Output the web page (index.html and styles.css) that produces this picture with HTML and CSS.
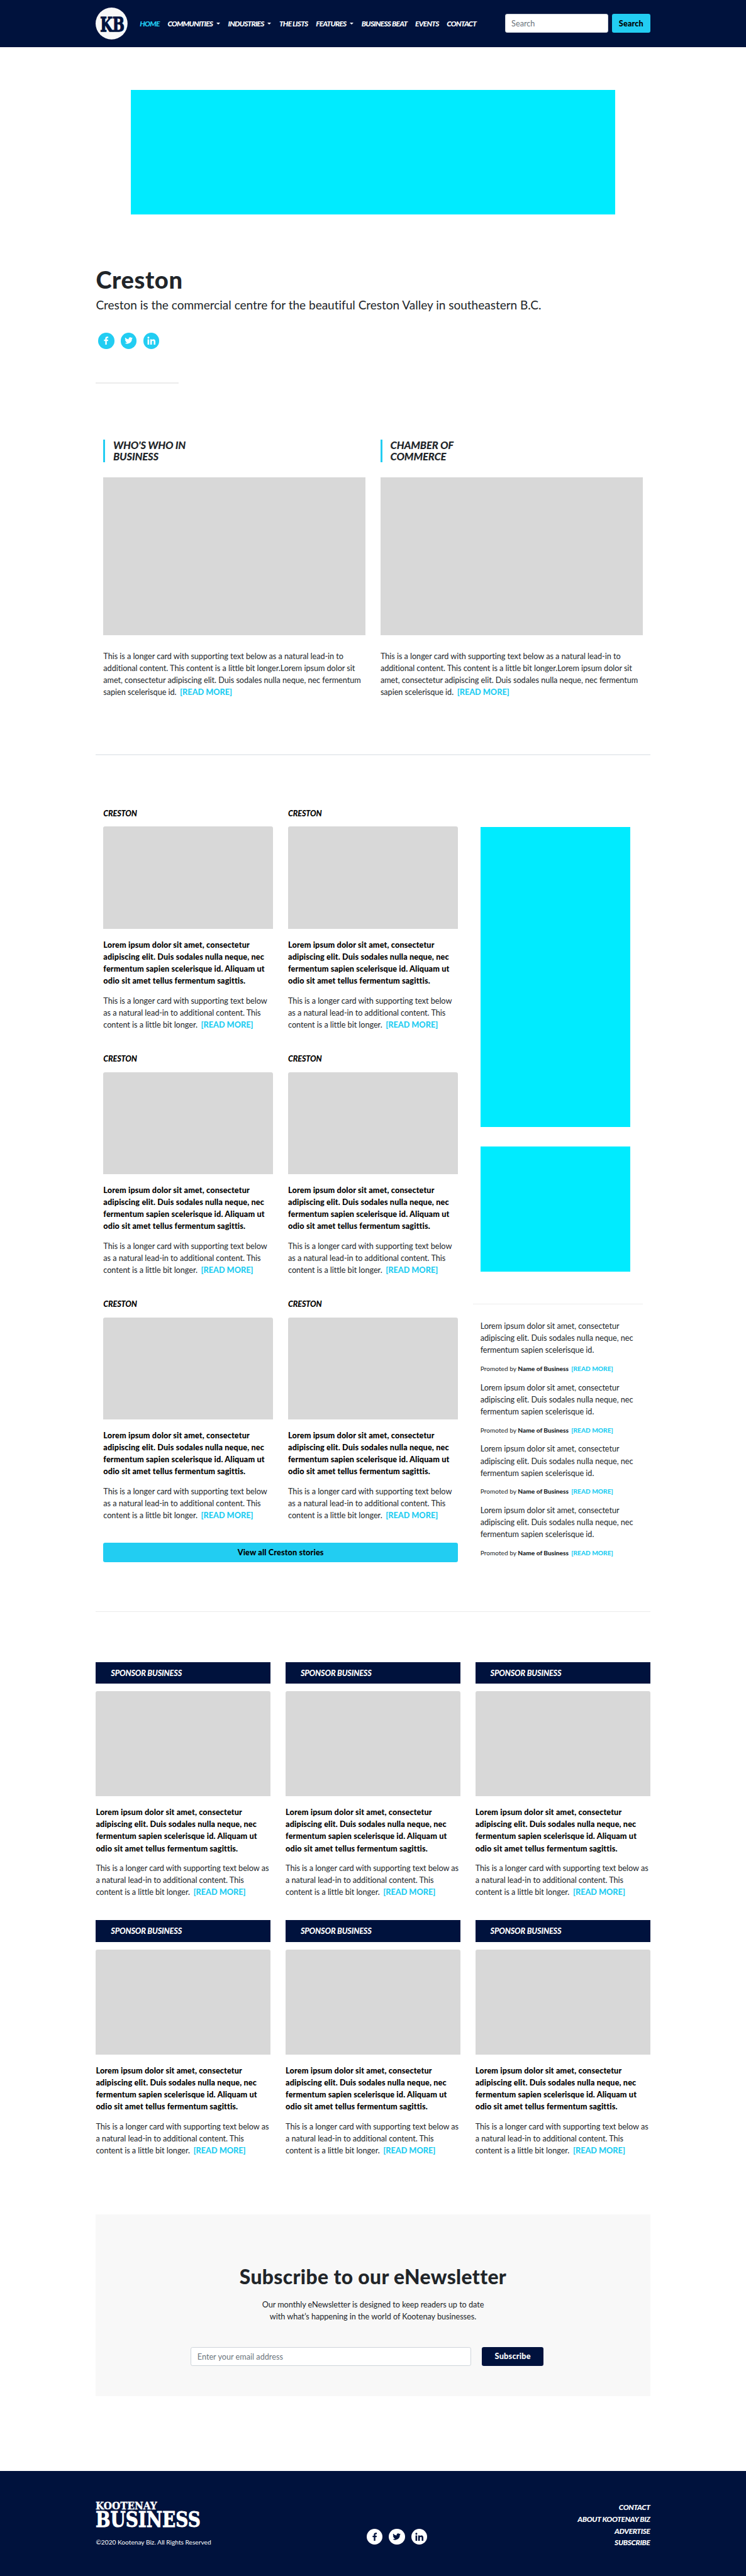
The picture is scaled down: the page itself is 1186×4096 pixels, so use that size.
FILE: index.html
```
<!DOCTYPE html>
<html lang="en"><head><meta charset="utf-8"><title>Creston</title><link rel="stylesheet" href="styles.css"></head>
<body><div class="page">
<svg class="defs" width="0" height="0"><defs>
<symbol id="fb" viewBox="0 0 32 32"><path d="M17.3 24v-7.3h2.5l.4-2.900h-2.900V12c0-.8.3-1.400 1.500-1.400h1.500V8c-.3 0-1.200-.1-2.200-.1-2.300 0-3.800 1.400-3.800 3.900v2h-2.500v2.900h2.500V24z"/></symbol>
<symbol id="tw" viewBox="0 0 32 32"><path d="M24 10.700c-.6.300-1.200.4-1.900.5.700-.4 1.200-1 1.400-1.800-.6.400-1.300.6-2.100.8a3.300 3.300 0 0 0-5.600 3c-2.700-.1-5.100-1.400-6.800-3.400-.9 1.500-.4 3.400 1 4.400-.5 0-1-.2-1.500-.4 0 1.600 1.100 2.900 2.600 3.200-.5.100-1 .2-1.500.1.400 1.300 1.600 2.200 3.100 2.300A6.600 6.600 0 0 1 8 20.700a9.300 9.300 0 0 0 14.300-8.300c.7-.4 1.300-1 1.700-1.700z"/></symbol>
<symbol id="li" viewBox="0 0 32 32"><path d="M8.300 13.300h3.300V24H8.300z"/><circle cx="10" cy="9.900" r="1.950"/><path d="M13.700 13.300h3.200v1.500c.5-.9 1.600-1.700 3.200-1.700 3.300 0 3.900 2.200 3.900 5V24h-3.300v-5.200c0-1.200 0-2.800-1.700-2.800s-2 1.300-2 2.700V24h-3.300z"/></symbol>
</defs></svg>
<header class="header"><div class="container bar">
<svg class="logo" viewBox="0 0 64 64"><circle cx="32" cy="32" r="32"/><text x="9" y="47.500" textLength="49" lengthAdjust="spacingAndGlyphs">KB</text></svg>
<nav class="nav"><a class="on">HOME</a><a class="drop">COMMUNITIES</a><a class="drop">INDUSTRIES</a><a>THE LISTS</a><a class="drop">FEATURES</a><a>BUSINESS BEAT</a><a>EVENTS</a><a>CONTACT</a></nav>
<form class="search"><input type="text" placeholder="Search"><button type="button">Search</button></form>
</div></header>
<div class="banner"></div>
<main class="container">
<h1>Creston</h1><p class="lead">Creston is the commercial centre for the beautiful Creston Valley in southeastern B.C.</p>
<div class="social"><a><svg><use href="#fb"/></svg></a><a><svg><use href="#tw"/></svg></a><a><svg><use href="#li"/></svg></a></div>
<hr class="short">
<section class="features">
<article><h2>WHO'S WHO IN<br>BUSINESS</h2><div class="pic"></div><p>This is a longer card with supporting text below as a natural lead-in to additional content. This content is a little bit longer.Lorem ipsum dolor sit amet, consectetur adipiscing elit. Duis sodales nulla neque, nec fermentum sapien scelerisque id. <a class="more">[READ MORE]</a></p></article>
<article><h2>CHAMBER OF<br>COMMERCE</h2><div class="pic"></div><p>This is a longer card with supporting text below as a natural lead-in to additional content. This content is a little bit longer.Lorem ipsum dolor sit amet, consectetur adipiscing elit. Duis sodales nulla neque, nec fermentum sapien scelerisque id. <a class="more">[READ MORE]</a></p></article>
</section>
<hr class="wide">
<div class="columns">
<section><div class="stories">
<article class="card"><h3>CRESTON</h3><div class="pic"></div><h4>Lorem ipsum dolor sit amet, consectetur adipiscing elit. Duis sodales nulla neque, nec fermentum sapien scelerisque id. Aliquam ut odio sit amet tellus fermentum sagittis.</h4><p>This is a longer card with supporting text below as a natural lead-in to additional content. This content is a little bit longer. <a class="more">[READ MORE]</a></p></article>
<article class="card"><h3>CRESTON</h3><div class="pic"></div><h4>Lorem ipsum dolor sit amet, consectetur adipiscing elit. Duis sodales nulla neque, nec fermentum sapien scelerisque id. Aliquam ut odio sit amet tellus fermentum sagittis.</h4><p>This is a longer card with supporting text below as a natural lead-in to additional content. This content is a little bit longer. <a class="more">[READ MORE]</a></p></article>
<article class="card"><h3>CRESTON</h3><div class="pic"></div><h4>Lorem ipsum dolor sit amet, consectetur adipiscing elit. Duis sodales nulla neque, nec fermentum sapien scelerisque id. Aliquam ut odio sit amet tellus fermentum sagittis.</h4><p>This is a longer card with supporting text below as a natural lead-in to additional content. This content is a little bit longer. <a class="more">[READ MORE]</a></p></article>
<article class="card"><h3>CRESTON</h3><div class="pic"></div><h4>Lorem ipsum dolor sit amet, consectetur adipiscing elit. Duis sodales nulla neque, nec fermentum sapien scelerisque id. Aliquam ut odio sit amet tellus fermentum sagittis.</h4><p>This is a longer card with supporting text below as a natural lead-in to additional content. This content is a little bit longer. <a class="more">[READ MORE]</a></p></article>
<article class="card"><h3>CRESTON</h3><div class="pic"></div><h4>Lorem ipsum dolor sit amet, consectetur adipiscing elit. Duis sodales nulla neque, nec fermentum sapien scelerisque id. Aliquam ut odio sit amet tellus fermentum sagittis.</h4><p>This is a longer card with supporting text below as a natural lead-in to additional content. This content is a little bit longer. <a class="more">[READ MORE]</a></p></article>
<article class="card"><h3>CRESTON</h3><div class="pic"></div><h4>Lorem ipsum dolor sit amet, consectetur adipiscing elit. Duis sodales nulla neque, nec fermentum sapien scelerisque id. Aliquam ut odio sit amet tellus fermentum sagittis.</h4><p>This is a longer card with supporting text below as a natural lead-in to additional content. This content is a little bit longer. <a class="more">[READ MORE]</a></p></article>
</div><button type="button" class="all">View all Creston stories</button></section>
<aside><div class="ad tall"></div><div class="ad"></div><div class="promos">
<p>Lorem ipsum dolor sit amet, consectetur adipiscing elit. Duis sodales nulla neque, nec fermentum sapien scelerisque id.</p><p class="by">Promoted by <b>Name of Business</b> <a class="more">[READ MORE]</a></p>
<p>Lorem ipsum dolor sit amet, consectetur adipiscing elit. Duis sodales nulla neque, nec fermentum sapien scelerisque id.</p><p class="by">Promoted by <b>Name of Business</b> <a class="more">[READ MORE]</a></p>
<p>Lorem ipsum dolor sit amet, consectetur adipiscing elit. Duis sodales nulla neque, nec fermentum sapien scelerisque id.</p><p class="by">Promoted by <b>Name of Business</b> <a class="more">[READ MORE]</a></p>
<p>Lorem ipsum dolor sit amet, consectetur adipiscing elit. Duis sodales nulla neque, nec fermentum sapien scelerisque id.</p><p class="by">Promoted by <b>Name of Business</b> <a class="more">[READ MORE]</a></p>
</div></aside>
</div>
<hr class="thin">
<section class="sponsors">
<article class="card"><h3>SPONSOR BUSINESS</h3><div class="pic"></div><h4>Lorem ipsum dolor sit amet, consectetur adipiscing elit. Duis sodales nulla neque, nec fermentum sapien scelerisque id. Aliquam ut odio sit amet tellus fermentum sagittis.</h4><p>This is a longer card with supporting text below as a natural lead-in to additional content. This content is a little bit longer. <a class="more">[READ MORE]</a></p></article>
<article class="card"><h3>SPONSOR BUSINESS</h3><div class="pic"></div><h4>Lorem ipsum dolor sit amet, consectetur adipiscing elit. Duis sodales nulla neque, nec fermentum sapien scelerisque id. Aliquam ut odio sit amet tellus fermentum sagittis.</h4><p>This is a longer card with supporting text below as a natural lead-in to additional content. This content is a little bit longer. <a class="more">[READ MORE]</a></p></article>
<article class="card"><h3>SPONSOR BUSINESS</h3><div class="pic"></div><h4>Lorem ipsum dolor sit amet, consectetur adipiscing elit. Duis sodales nulla neque, nec fermentum sapien scelerisque id. Aliquam ut odio sit amet tellus fermentum sagittis.</h4><p>This is a longer card with supporting text below as a natural lead-in to additional content. This content is a little bit longer. <a class="more">[READ MORE]</a></p></article>
<article class="card"><h3>SPONSOR BUSINESS</h3><div class="pic"></div><h4>Lorem ipsum dolor sit amet, consectetur adipiscing elit. Duis sodales nulla neque, nec fermentum sapien scelerisque id. Aliquam ut odio sit amet tellus fermentum sagittis.</h4><p>This is a longer card with supporting text below as a natural lead-in to additional content. This content is a little bit longer. <a class="more">[READ MORE]</a></p></article>
<article class="card"><h3>SPONSOR BUSINESS</h3><div class="pic"></div><h4>Lorem ipsum dolor sit amet, consectetur adipiscing elit. Duis sodales nulla neque, nec fermentum sapien scelerisque id. Aliquam ut odio sit amet tellus fermentum sagittis.</h4><p>This is a longer card with supporting text below as a natural lead-in to additional content. This content is a little bit longer. <a class="more">[READ MORE]</a></p></article>
<article class="card"><h3>SPONSOR BUSINESS</h3><div class="pic"></div><h4>Lorem ipsum dolor sit amet, consectetur adipiscing elit. Duis sodales nulla neque, nec fermentum sapien scelerisque id. Aliquam ut odio sit amet tellus fermentum sagittis.</h4><p>This is a longer card with supporting text below as a natural lead-in to additional content. This content is a little bit longer. <a class="more">[READ MORE]</a></p></article>
</section>
<section class="newsletter"><h2>Subscribe to our eNewsletter</h2><p>Our monthly eNewsletter is designed to keep readers up to date<br>with what’s happening in the world of Kootenay businesses.</p>
<form><input type="text" placeholder="Enter your email address"><button type="button">Subscribe</button></form></section>
</main>
<footer class="footer"><div class="container foot">
<div class="brand"><svg viewBox="0 0 212 54"><text class="k" x="0" y="17" textLength="123" lengthAdjust="spacingAndGlyphs">KOOTENAY</text><text class="b" x="0" y="52.500" textLength="210" lengthAdjust="spacingAndGlyphs">BUSINESS</text></svg><p>©2020 Kootenay Biz. All Rights Reserved</p></div>
<div class="social white"><a><svg><use href="#fb"/></svg></a><a><svg><use href="#tw"/></svg></a><a><svg><use href="#li"/></svg></a></div>
<nav class="links"><a>CONTACT</a><a>ABOUT KOOTENAY BIZ</a><a>ADVERTISE</a><a>SUBSCRIBE</a></nav>
</div></footer>
</div></body></html>
```
FILE: styles.css
```
* { box-sizing: border-box; }
body { margin: 0; background: #fff; }
.page { zoom: 0.79384; width: 1494px; height: 5160px; display: flex; flex-direction: column; font: 400 16px/24px Lato, sans-serif; letter-spacing: -0.060px; color: #212529; }
.defs { display: none; }
h1, h2, h3, h4, p, hr { margin: 0; }
hr { border: 0; background: #ececec; }
.container { width: 1110px; margin: 0 auto; }
.more { color: #22cdf2; font-weight: 900; letter-spacing: 0; margin-left: 3px; white-space: nowrap; }
input { font: 400 16px/24px Lato, sans-serif; height: 38px; padding: 6px 12px; border: 1px solid #ced4da; border-radius: 4px; background: #fff; }
input::placeholder { color: #6c757d; opacity: 1; }
button { font: 900 16px/24px Lato, sans-serif; letter-spacing: 0.170px; height: 38px; padding: 0; border: 0; border-radius: 4px; background: #22cdf2; color: #000; }

.header { height: 94px; background: #00123d; flex: none; }
.bar { height: 94px; display: flex; align-items: center; }
.logo { width: 64px; height: 64px; flex: none; overflow: visible; letter-spacing: 0; }
.logo circle { fill: #f8f8f8; }
.logo text { font: 700 40px "DejaVu Serif", serif; fill: #00123d; stroke: #00123d; stroke-width: 1.6; }
.nav { margin-left: 24px; display: flex; gap: 16px; font-size: 15px; font-weight: 900; font-style: italic; letter-spacing: -0.950px; color: #fff; white-space: nowrap; }
.nav .on { color: #22cdf2; }
.drop::after { content: ""; display: inline-block; margin-left: 7px; vertical-align: 3px; border: 4px solid transparent; border-top-color: #fff; border-bottom: 0; }
.search { margin-left: auto; display: flex; gap: 8px; }
.search input { width: 207px; }
.search button { width: 76px; }

.banner { width: 970px; height: 250px; margin: 86px auto 0; background: #00ebff; flex: none; }
main.container { flex: none; height: 4370px; margin-bottom: 150px; }
h1 { margin-top: 100px; font-size: 48px; line-height: 58px; font-weight: 900; letter-spacing: 0.750px; }
.lead { margin-top: 5px; font-size: 24px; line-height: 36px; letter-spacing: -0.030px; white-space: nowrap; }
.social { display: flex; gap: 13px; padding-left: 5px; margin-top: 38px; }
.social a { width: 32px; height: 32px; border-radius: 50%; background: #22cdf2; fill: #fff; }
.social svg { display: block; width: 32px; height: 32px; }
.short { width: 166px; height: 2px; margin-top: 67px; }

.features { display: grid; grid-template-columns: 525px 525px; gap: 30px; padding: 0 15px; margin-top: 112px; height: 631px; }
.features h2 { height: 46px; border-left: 4px solid #22cdf2; padding-left: 16px; font-size: 21px; line-height: 23.300px; font-weight: 900; font-style: italic; letter-spacing: -0.250px; }
.features .pic { height: 316px; margin: 30px 0 31px; }
.pic { background: #d8d8d8; }
.wide { height: 2px; background: #e9ecef; }

.columns { display: flex; margin-top: 104px; padding: 0 15px; height: 1611px; }
.stories { display: grid; grid-template-columns: 340px 340px; column-gap: 30px; row-gap: 43.500px; }
.card h3 { font-size: 16px; line-height: 24px; font-weight: 900; font-style: italic; letter-spacing: -0.200px; color: #000; margin-bottom: 15px; }
.card .pic { height: 205px; border-radius: 4px 4px 0 0; margin-bottom: 20px; }
.card h4 { font-size: 16px; line-height: 24px; font-weight: 900; letter-spacing: 0.170px; color: #000; margin-bottom: 16px; }
.all { width: 710px; margin-top: 43px; }
aside { padding-top: 40px; margin-left: 30px; width: 340px; }
.ad { width: 300px; height: 250px; margin-left: 15px; background: #00ebff; }
.tall { height: 600px; margin-bottom: 40px; }
.promos { border-top: 2px solid #ececec; margin-top: 64px; padding: 32px 15px 0; }
.promos p { margin-bottom: 16px; }
.promos .by { font-size: 12.800px; line-height: 19.200px; letter-spacing: 0; white-space: nowrap; }
.by .more { margin-left: 2px; }
.by b { font-weight: 900; }
.thin { height: 1px; }

.sponsors { display: grid; grid-template-columns: repeat(3, 350px); column-gap: 30px; row-gap: 43.500px; margin-top: 100px; }
.sponsors .card h3 { height: 44px; padding: 10px 30px; background: #00123d; color: #fff; }
.sponsors .card .pic { height: 210.500px; }

.newsletter { height: 364px; margin-top: 116.500px; background: #f8f8f8; text-align: center; padding-top: 100px; }
.newsletter h2 { font-size: 40px; line-height: 48px; font-weight: 900; letter-spacing: 0.500px; }
.newsletter p { margin-top: 20px; }
.newsletter form { display: flex; gap: 21px; margin: 49px 0 0 190px; }
.newsletter input { width: 562px; }
.newsletter form button { width: 124px; background: #00123d; color: #fff; letter-spacing: 0.300px; }

.footer { height: 210px; background: #00123d; color: #fff; flex: none; }
.foot { display: grid; grid-template-columns: 542px 122px 1fr; }
.brand { padding-top: 59px; letter-spacing: 0; }
.brand svg { display: block; width: 212px; height: 54px; fill: #fff; stroke: #fff; overflow: visible; }
.k { font: 700 21px "DejaVu Serif", serif; stroke-width: .5; }
.b { font: 700 42.500px "DejaVu Serif", serif; stroke-width: 1.2; }
.brand p { font-size: 12.800px; line-height: 20px; margin-top: 20px; }
.white { margin-top: 115px; padding: 0; }
.white a { background: #fff; fill: #00123d; flex: none; }
.links { display: flex; flex-direction: column; align-items: flex-end; padding-top: 61px; font-size: 15px; line-height: 23.700px; font-weight: 900; font-style: italic; letter-spacing: -0.450px; }
```
